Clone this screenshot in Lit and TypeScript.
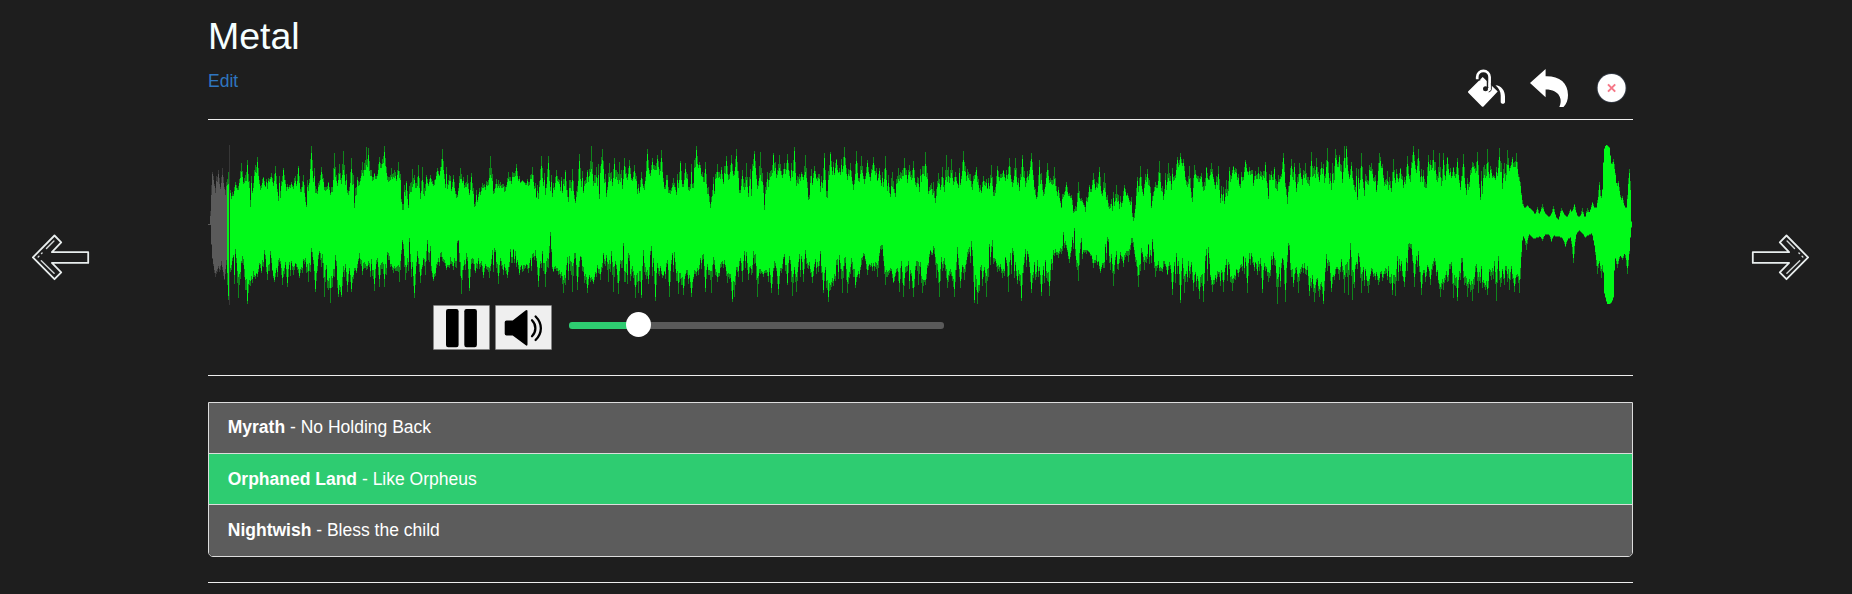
import { LitElement, html, css, svg } from "lit";
import { customElement, property, state } from "lit/decorators.js";

type Points = [number, number][];

// Level samples, written as "x,y" pairs. Each string covers one quarter of the track;
// a quarter is 1080 units long, three units make one pixel, and the rest line is y = 284.
const QUARTER = 1080;
const REST = 284;

const parse = (quarters: string[]): Points =>
  quarters.flatMap((q, i) =>
    q.trim().split(/\s+/).map((p) => {
      const [x, y] = p.split(",").map(Number);
      return [(x + i * QUARTER) / 3 - 8, Math.abs(y - REST) / 3] as [number, number];
    })
  );

const topPeaks = parse([
  "37,125 55,120 67,115 85,125 104,155 122,100 142,90 172,82 188,140 212,130 226,108 248,115 272,155 293,108 310,135 334,48 362,112 385,155 403,70 417,103 430,63 454,85 470,140 485,97 497,52 505,54 522,130 536,80 553,48 572,115 582,120 595,97 619,153 636,118 653,105 665,110 678,135 690,135 712,113 725,57 760,135 781,115 800,135 812,128 847,160 871,78 895,150 925,125 949,102 965,150 995,110 1022,77 1043,78 1068,120",
  "14,120 35,118 58,72 80,120 94,48 127,58 148,98 163,85 176,95 191,85 208,90 221,105 243,125 260,58 275,85 290,75 302,60 338,145 360,92 375,100 408,48 418,95 436,95 470,102 482,110 497,77 512,75 527,58 545,120 557,100 581,62 599,65 620,125 639,70 656,75 673,100 682,72 703,50 722,125 735,75 763,108 793,70 809,65 828,88 851,50 870,100 887,62 904,78 922,90 938,82 957,115 976,78 995,125 1013,115 1031,83 1047,105 1060,92",
  "14,67 38,155 55,130 67,112 77,75 92,88 104,125 128,63 167,112 190,137 212,105 232,108 250,120 268,83 285,83 307,75 332,68 356,90 380,98 401,112 415,172 437,157 452,195 464,228 474,157 487,210 506,165 520,130 536,110 551,128 588,165 613,165 622,190 650,140 661,108 682,118 704,155 718,93 745,100 772,80 781,70 790,88 808,108 822,105 858,110 874,98 893,108 917,150 928,112 940,108 976,90 1013,112 1034,95 1063,112 1075,135",
  "8,70 32,88 42,98 58,98 75,100 92,65 109,85 122,95 142,55 166,58 178,75 193,48 199,48 214,95 244,68 274,98 298,68 320,122 340,88 361,113 382,78 398,48 415,57 430,120 445,75 460,60 478,70 490,68 502,80 520,112 532,85 550,73 575,95 592,65 622,57 640,135 658,55 682,60 695,80 709,68 718,142 727,210 742,225 770,232 787,222 818,228 842,235 870,238 883,222 905,235 920,235 935,215 956,155 978,45 1000,88 1015,152 1025,198 1048,118",
]);

const topBody = parse([
  "30,283 32,270 36,160 45,185 60,190 80,190 97,210 108,190 125,165 150,225 160,165 190,185 210,160 235,210 250,175 270,185 290,180 317,235 330,165 350,190 365,170 395,210 410,180 440,185 466,240 480,165 500,165 512,175 545,130 565,175 595,160 606,235 615,230 627,255 642,190 671,250 680,175 700,165 720,140 740,185 770,205 785,165 800,200 822,230 850,185 890,190 910,185 940,165 965,160 990,165 1010,208 1030,185 1052,205 1075,170",
  "8,190 22,230 40,225 65,190 90,180 116,212 125,130 135,200 160,180 178,215 200,160 220,165 238,205 265,150 280,140 300,165 328,190 355,190 390,175 400,170 418,115 430,190 451,235 465,175 500,170 525,145 545,220 570,220 580,130 595,190 612,235 640,160 690,150 712,205 725,155 745,210 765,150 785,190 800,230 812,150 840,135 882,180 925,150 940,145 960,175 994,220 1015,180 1040,170 1078,185",
  "5,185 25,190 46,250 55,180 75,225 90,185 120,165 140,160 155,210 165,150 175,210 200,175 222,220 235,170 250,155 290,180 315,185 332,135 352,225 385,165 405,205 424,235 435,200 452,210 458,260 470,258 480,225 500,245 510,200 520,185 545,210 560,230 580,240 598,255 615,200 630,225 641,282 650,225 680,180 695,240 705,185 732,210 760,165 785,115 800,185 817,240 825,150 845,155 852,230 862,160 880,155 900,240 925,230 935,140 965,175 978,130 1000,165 1030,175 1045,205 1055,150 1068,235 1078,165",
  "0,160 10,145 19,228 30,165 52,210 60,150 85,195 105,185 130,150 150,190 161,225 168,110 187,185 200,140 222,190 233,210 256,190 270,140 290,190 300,110 325,225 350,160 380,180 400,120 434,210 450,140 485,215 500,140 530,165 557,195 580,130 606,230 630,150 655,155 673,215 690,120 715,155 722,195 727,245 735,235 750,238 772,262 785,245 805,262 820,255 835,272 845,248 860,262 880,245 895,262 915,265 930,245 945,235 962,225 967,170 970,62 978,46 988,55 992,100 1005,145 1015,200 1030,235 1040,235 1048,150 1051,260 1054,283",
]);

const bottomPeaks = parse([
  "46,440 72,450 83,510 115,505 142,523 170,440 184,430 202,450 222,455 245,465 262,470 280,435 298,445 325,455 344,485 371,500 389,518 415,500 424,502 440,485 454,485 468,430 485,435 521,482 538,472 553,472 580,430 598,455 616,450 643,505 660,460 675,435 700,452 737,420 760,420 783,492 806,482 825,430 850,445 868,445 893,462 922,445 958,435 985,430 1015,470 1034,472 1060,425 1075,435",
  "10,490 35,485 52,480 80,490 98,462 120,450 145,455 160,485 174,492 226,505 235,490 244,503 263,462 286,513 305,445 328,500 353,492 368,495 394,500 415,435 436,485 452,488 470,455 502,460 517,515 523,500 545,455 565,450 590,502 610,440 632,490 655,495 680,465 695,498 707,485 730,455 755,460 790,488 803,515 820,468 845,488 860,490 884,475 920,435 950,440 976,465 1000,460 1017,485 1028,500 1058,500 1075,465",
  "5,490 14,465 35,375 48,445 58,500 80,475 103,500 120,475 133,450 163,520 172,523 197,500 230,425 245,445 263,485 292,462 302,512 332,490 362,498 386,497 413,385 447,400 473,452 500,355 520,415 540,428 578,467 610,410 625,395 653,472 673,420 704,440 740,435 757,495 779,518 791,490 820,482 836,508 848,515 877,485 910,485 935,482 955,440 980,488 1010,435 1027,490 1045,455 1070,522",
  "14,515 38,470 55,488 70,430 88,498 103,517 118,500 130,523 152,485 176,450 193,490 205,495 217,510 244,490 265,490 295,465 335,495 344,498 372,470 403,470 422,495 450,465 480,500 490,480 520,505 532,512 562,500 577,513 595,490 620,495 649,513 688,480 703,485 716,490 737,360 785,332 813,335 854,350 880,400 915,323 950,432 962,445 985,523 1012,415 1025,390 1042,432",
]);

const bottomBody = parse([
  "30,286 35,380 45,420 60,390 72,420 78,370 92,400 106,355 122,400 130,370 145,425 165,430 193,345 200,400 208,350 218,430 240,380 270,385 300,400 331,355 350,400 367,320 380,400 408,375 418,450 430,380 460,415 487,345 500,400 530,370 555,355 575,400 590,385 610,320 618,370 627,325 640,400 655,355 665,400 679,310 688,310 697,430 722,370 745,400 778,320 790,400 802,360 830,370 860,400 878,355 900,370 920,410 933,345 950,380 970,410 1000,360 1020,380 1051,310 1056,400 1078,400",
  "0,410 15,400 28,335 45,350 70,395 95,440 115,400 130,370 157,335 170,400 190,340 212,390 235,390 250,330 260,400 269,345 292,380 310,430 320,370 345,370 375,420 400,430 430,350 445,400 458,345 470,420 490,390 515,420 540,370 555,340 570,400 583,320 600,420 630,400 660,400 683,355 705,400 734,340 750,410 781,365 810,430 853,350 865,400 877,345 890,430 910,370 930,400 965,345 980,400 1005,420 1020,370 1045,400 1060,430 1073,330",
  "0,380 12,440 25,375 43,318 52,380 65,355 85,395 98,420 110,330 120,400 140,370 158,325 172,430 190,400 214,325 225,380 250,400 268,335 290,400 317,355 335,400 375,390 400,360 415,355 430,305 445,370 463,295 470,370 478,310 490,355 520,370 545,400 560,320 575,360 600,370 634,325 650,370 697,330 710,400 740,395 773,370 788,360 800,420 810,370 830,430 862,330 870,425 900,430 907,380 940,420 960,400 985,340 1000,400 1022,350 1040,410 1060,365 1078,375",
  "0,420 10,360 25,340 40,400 75,380 100,430 125,440 142,360 160,430 199,340 214,295 222,420 239,355 255,420 290,420 320,420 352,355 370,420 382,345 394,345 415,370 435,420 458,370 475,440 500,410 513,375 530,400 550,385 565,430 595,375 610,445 632,390 655,350 665,420 683,375 710,430 722,350 728,320 745,310 760,325 800,312 840,320 855,330 885,315 897,300 915,318 935,310 942,345 955,385 967,380 972,490 980,520 992,520 1000,500 1003,380 1020,375 1046,360 1052,300 1054,285",
]);

const WIDTH = 1425;
const MIDDLE = 79.5;

function valueAt(points: Points, x: number): number {
  if (x <= points[0][0]) return points[0][1];
  for (let i = 1; i < points.length; i++) {
    const [x1, y1] = points[i];
    if (x <= x1) {
      const [x0, y0] = points[i - 1];
      return x1 === x0 ? y1 : y0 + ((y1 - y0) * (x - x0)) / (x1 - x0);
    }
  }
  return 0;
}

// Column levels: the body line, raised by the listed peaks and by small seeded ripples.
function levels(body: Points, peaks: Points, seed: number): { solid: number[]; faint: number[] } {
  let s = seed;
  const rnd = () => ((s = (s * 16807) % 2147483647) / 2147483647);
  const solid: number[] = [];
  const faint: number[] = [];
  for (let x = 0; x < WIDTH; x++) {
    const base = valueAt(body, x);
    solid.push(base);
    faint.push(base + (base > 1 ? 1 : 0));
    if (x > 4 && x < 1308) {
      const room = Math.max(0, valueAt(peaks, x) - base);
      const r = rnd();
      if (r > 0.4) {
        faint[x] += room * (r - 0.2) * 0.9;
        solid[x] += room * (r - 0.3) * 0.75;
      } else {
        faint[x] += rnd() * 4;
        solid[x] -= rnd() * 2;
      }
    }
  }
  const reach = [1, 0.66, 0.26];
  for (const [px, height] of peaks) {
    const c = Math.round(px);
    const strong = 0.45 + rnd() * 0.5;
    for (let d = -2; d <= 2; d++) {
      const x = c + d;
      if (x < 1 || x >= WIDTH - 2) continue;
      const base = valueAt(body, x);
      const rise = Math.max(0, height - base) * reach[Math.abs(d)];
      faint[x] = Math.max(faint[x], base + rise);
      solid[x] = Math.max(solid[x], base + rise * (d === 0 ? strong : 0.6));
    }
  }
  return { solid, faint };
}

const upper = levels(topBody, topPeaks, 4211);
const lower = levels(bottomBody, bottomPeaks, 977);

function columns(up: number[], down: number[]): string {
  let d = "";
  for (let x = 0; x < WIDTH; x++) {
    if (up[x] + down[x] < 0.5) continue;
    const y0 = MIDDLE - up[x];
    const y1 = MIDDLE + down[x];
    d += `M${x} ${y0.toFixed(1)}h1V${y1.toFixed(1)}h-1z`;
  }
  return d;
}

const solidPath = columns(upper.solid, lower.solid);
const faintPath = columns(upper.faint, lower.faint);

@customElement("wave-form")
export class WaveForm extends LitElement {
  @property({ type: Number }) played = 20;

  static styles = css`
    :host { display: block; height: 160px; }
    svg { display: block; }
    .rest { fill: #00fa19; }
    .past { fill: #5a5a5a; }
    .faint { opacity: 0.48; }
    .cursor { fill: #373737; }
  `;

  render() {
    const p = this.played;
    return html`<svg width="1425" height="160" viewBox="0 0 1425 160" shape-rendering="crispEdges">
      <clipPath id="past"><rect width=${p - 1} height="160"></rect></clipPath>
      <clipPath id="rest"><rect x=${p - 1} width=${WIDTH - p} height="160"></rect></clipPath>
      ${["past", "rest"].map(
        (k) => svg`<g class=${k} clip-path="url(#${k})">
          <path class="faint" d=${faintPath}></path><path d=${solidPath}></path></g>`
      )}
      <rect class="cursor" x=${p + 1} y="0" width="1" height="160"></rect>
    </svg>`;
  }
}

@customElement("page-arrow")
export class PageArrow extends LitElement {
  @property({ type: Boolean, reflect: true }) forward = false;

  static styles = css`
    :host { display: block; width: 58px; height: 48px; }
    :host([forward]) { transform: scaleX(-1); }
    svg { display: block; fill: none; stroke: #e9eeee; stroke-width: 1.8; stroke-linejoin: round; }
    .fine { stroke-width: 1.4; stroke-linecap: round; stroke: #d4d8d8; }
  `;

  render() {
    return html`<svg width="58" height="48" viewBox="0 0 58 48">
      <path d="M.9 23.400 22.500 1.500l6.700 6.800-9.300 9.900h36.300v10.700H19.900l9.300 9.400-6.700 6.900z"></path>
      <path class="fine" d="M14.500 14.600l7.400-7.500M9.500 19.500l.6-.6M6.200 23l.7-.7M9.300 26.700l12.800 12.600"></path>
    </svg>`;
  }
}

@customElement("app-root")
export class AppRoot extends LitElement {
  @state() private current = 1;

  private tracks = [
    { artist: "Myrath", title: "No Holding Back" },
    { artist: "Orphaned Land", title: "Like Orpheus" },
    { artist: "Nightwish", title: "Bless the child" },
  ];

  static styles = css`
    * { box-sizing: border-box; }
    :host {
      display: grid;
      grid-template-columns: 208px 1425px 1fr;
      height: 594px;
      overflow: hidden;
      background: #1e1e1e;
      color: #fff;
      font: 17.5px/25px "Liberation Sans", Arial, sans-serif;
    }
    .side { padding-top: 234px; display: flex; }
    .prev { padding-left: 32px; }
    .next { padding-left: 118px; }
    header { height: 119px; padding-top: 16px; display: flex; justify-content: space-between; }
    h2 { margin: 0 0 11.5px; font-size: 37.5px; line-height: 41.25px; font-weight: 400; color: #f5ffff; }
    a { color: #2f76c0; text-decoration: none; }
    .tools { display: flex; gap: 24px; padding: 53px 5px 0 0; height: 92px; }
    .tools svg { display: block; }
    hr { margin: 0; border: 0; height: 1px; background: #eee; }
    .player { height: 255px; padding-top: 25px; }
    .controls { display: flex; padding-left: 225px; }
    .button {
      width: 57px; height: 45px; padding: 0; margin-right: 5px;
      border: 1px solid #858585; border-radius: 1px; background: #efefef;
    }
    .button svg { display: block; }
    .slider {
      margin: 7px 0 0 12px; width: 375px; height: 25px;
      display: flex; align-items: center;
    }
    .level { height: 7px; width: 58px; margin-top: 2px; background: #2ecc71; border-radius: 3px 0 0 3px; }
    .thumb { width: 25px; height: 25px; margin: 0 -1px; border-radius: 50%; background: #fff; z-index: 1; }
    .track { height: 7px; flex: 1; margin-top: 2px; background: #5a5a5a; border-radius: 0 3px 3px 0; }
    ul {
      list-style: none; margin: 26px 0 25px; padding: 0; height: 155px;
      border: 1px solid #ddd; border-radius: 0 0 5px 5px; overflow: hidden;
    }
    li { height: 51px; padding: 13px 18.75px 12px; background: #5c5c5c; border-bottom: 1px solid #ddd; }
    li:first-child { padding-top: 12px; }
    li:last-child { height: 52px; border: 0; }
    li.active { background: #2ecc71; }
  `;

  render() {
    return html`
      <div class="side prev"><page-arrow></page-arrow></div>
      <main>
        <header>
          <div><h2>Metal</h2><a>Edit</a></div>
          <div class="tools">
            <svg width="38" height="38" viewBox="0 0 38 38" fill="none">
              <path d="M.3 22.300 14.700 8 29.700 22.600 15.500 37.500q-.8.600-1.600 0L.3 23.700q-.6-.7 0-1.400z" fill="#fff"></path>
              <path d="M11.300 11.500V8.200a4.200 4.200 0 0 1 8.400 0V19" stroke="#1e1e1e" stroke-width="1.900"></path>
              <path d="M9.200 10.300V8a6.200 6.200 0 0 1 12.400 0v10.500" stroke="#fff" stroke-width="2.700"></path>
              <path d="M23.400 14v6.500q-.6 2.200-2.700 2.500" stroke="#1e1e1e" stroke-width=".9"></path>
              <circle cx="17.500" cy="19.700" r="2.500" fill="#1e1e1e"></circle>
              <path d="M27.500 16.200c5.600 0 9.500 5.300 9.500 11.300V33c0 2.400-4.300 2.400-4.300 0v-6.500c0-3.700-1.500-7.200-5.200-10.300z" fill="#fff"></path>
            </svg>
            <svg width="38" height="38" viewBox="0 0 38 38">
              <path d="M0 14 15.600 0v7.200C29 6.800 38 13.500 38 26c0 5-1.500 9-4.500 12h-4.200C33 31 30 20.500 15.600 20.500v7.700z" fill="#fff"></path>
            </svg>
            <svg width="36" height="38" viewBox="0 0 36 38" fill="none">
              <circle cx="19.600" cy="19" r="15" fill="#343b46"></circle>
              <circle cx="19.600" cy="19" r="14" fill="#fff"></circle>
              <path d="M16 15.400l7.200 7.200m0-7.200l-7.200 7.200" stroke="#f57787" stroke-width="2"></path>
            </svg>
          </div>
        </header>
        <hr />
        <section class="player">
          <wave-form .played=${20}></wave-form>
          <div class="controls">
            <button class="button" aria-label="Pause">
              <svg width="55" height="43" viewBox="0 0 55 43">
                <rect x="12" y="3" width="12.600" height="38.300" rx="2.200"></rect>
                <rect x="30.300" y="3" width="12.600" height="38.300" rx="2.200"></rect>
              </svg>
            </button>
            <button class="button" aria-label="Volume">
              <svg width="55" height="43" viewBox="0 0 55 43">
                <path d="M10.500 14.500h6.200L29.500 4.500q2-1.300 2 .8v33q0 2.200-2 .8L16.700 29.500h-6.200q-1.800 0-1.800-1.800V16.300q0-1.800 1.800-1.800z"></path>
                <path d="M36 14.200c4.500 4.500 4.500 11.500 0 16M39.600 10.500c7 7 7 16.500 0 23.500" fill="none" stroke="#000" stroke-width="2.300" stroke-linecap="round"></path>
              </svg>
            </button>
            <div class="slider"><div class="level"></div><div class="thumb"></div><div class="track"></div></div>
          </div>
        </section>
        <hr />
        <ul>
          ${this.tracks.map(
            (t, i) => html`<li class=${i === this.current ? "active" : ""}><b>${t.artist}</b> - ${t.title}</li>`
          )}
        </ul>
        <hr />
      </main>
      <div class="side next"><page-arrow forward></page-arrow></div>
    `;
  }
}
